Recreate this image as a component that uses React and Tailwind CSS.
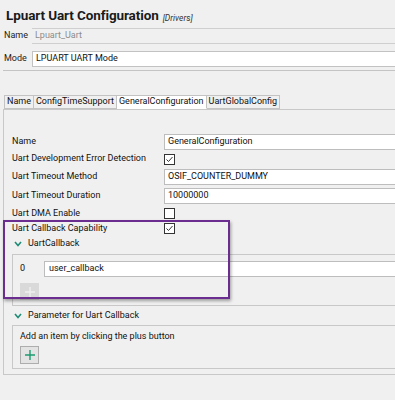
import React from 'react';

const font = { fontFamily: 'Roboto, "Liberation Sans", Arial, sans-serif' };

const Chevron = () => (
  <svg width="8" height="6" viewBox="0 0 8 6" className="shrink-0">
    <polyline points="1,1 4,4.5 7,1" fill="none" stroke="#1f8c78" strokeWidth="1.6" />
  </svg>
);

const Check = () => (
  <div className="w-[11px] h-[11px] border border-[#333] bg-white flex items-center justify-center">
    <svg width="9" height="9" viewBox="0 0 9 9">
      <polyline points="1.5,4.5 3.5,6.5 7.5,2" fill="none" stroke="#333" strokeWidth="1" />
    </svg>
  </div>
);

const Box = () => <div className="w-[11px] h-[11px] border border-[#333] bg-white" />;

const Field = ({ children, pad = 'pl-[3px]' }) => (
  <div className={`flex-1 h-[16px] bg-white border border-[#bdbdbd] flex items-center ${pad} text-[9px] text-[#111]`}>
    {children}
  </div>
);

const Row = ({ label, h, children }) => (
  <div className="flex items-center" style={{ height: h }}>
    <div className="w-[160px] pl-[8px] text-[9px] text-[#111]">{label}</div>
    <div className="flex-1 flex items-center">{children}</div>
  </div>
);

const PlusIcon = ({ color, size = 12 }) => (
  <svg width={size} height={size} viewBox="0 0 12 12">
    <path d="M6 1v10M1 6h10" stroke={color} strokeWidth="1.4" />
  </svg>
);

export default function App() {
  return (
    <div className="w-[395px] h-[400px] bg-[#f0f0f0] overflow-hidden relative" style={font}>
      <div className="w-[430px]">
        {/* header */}
        <div className="h-[26px] flex items-end pl-[6px] pb-[4px]">
          <span className="text-[13.5px] font-bold text-[#1b1b1b] leading-none tracking-[-0.1px]">Lpuart Uart Configuration</span>
          <span className="text-[8.5px] italic text-[#333] ml-[4px] leading-none">[Drivers]</span>
        </div>
        <div className="flex items-center h-[17px] mt-[1px]">
          <div className="w-[32px] pl-[4px] text-[9px] text-[#222]">Name</div>
          <div className="flex-1 h-[16px] border-y border-[#cfcfcf] flex items-center pl-[3px] text-[9px] text-[#8c8c8c]">Lpuart_Uart</div>
        </div>
        <div className="flex items-center h-[17px] mt-[6px]">
          <div className="w-[32px] pl-[4px] text-[9px] text-[#222]">Mode</div>
          <div className="flex-1 h-[16px] bg-white border border-[#c2c2c2] flex items-center pl-[3px] text-[9px] text-[#111]">LPUART UART Mode</div>
        </div>
        <div className="h-px bg-[#c4c4c4] ml-[3px] mt-[3px]" />

        {/* tabs */}
        <div className="flex ml-[4px] mt-[24px] h-[14px] text-[9px] text-[#111]">
          <div className="px-[2px] border border-[#c3c3c3] bg-[#f0f0f0] flex items-center">Name</div>
          <div className="px-[2px] border-y border-r border-[#c3c3c3] bg-[#f0f0f0] flex items-center">ConfigTimeSupport</div>
          <div className="px-[2px] border-y border-r border-[#c3c3c3] border-b-white bg-white flex items-center">GeneralConfiguration</div>
          <div className="px-[2px] border-y border-r border-[#c3c3c3] bg-[#f0f0f0] flex items-center">UartGlobalConfig</div>
        </div>

        {/* panel */}
        <div className="ml-[3px] border border-[#c8c8c8] pt-[23px] pb-[5px]">
          <Row label="Name" h={17}><Field>GeneralConfiguration</Field></Row>
          <Row label="Uart Development Error Detection" h={18}><Check /></Row>
          <Row label="Uart Timeout Method" h={18}><Field>OSIF_COUNTER_DUMMY</Field></Row>
          <Row label="Uart Timeout Duration" h={20}><Field>10000000</Field></Row>
          <Row label="Uart DMA Enable" h={15}><Box /></Row>
          <Row label="Uart Callback Capability" h={15}><Check /></Row>

          <div className="flex items-center gap-[6px] h-[14px] pl-[10px] mt-[1px] text-[9px] text-[#111]">
            <Chevron />
            <span>UartCallback</span>
          </div>
          <div className="ml-[8px] mt-[3px] border border-[#c8c8c8] pt-[6px] pb-[5px]">
            <div className="flex items-center h-[16px]">
              <div className="w-[31px] pl-[7px] text-[9px] text-[#111]">0</div>
              <Field pad="pl-[4px]">user_callback</Field>
            </div>
            <div className="ml-[7px] mt-[6px] w-[19px] h-[17px] bg-[#d9d9d9] flex items-center justify-center">
              <PlusIcon color="#efefef" />
            </div>
          </div>

          <div className="flex items-center gap-[6px] h-[14px] pl-[10px] mt-[3px] text-[9px] text-[#111]">
            <Chevron />
            <span>Parameter for Uart Callback</span>
          </div>
          <div className="ml-[8px] mt-[2px] border border-[#c8c8c8] pt-[5px] pb-[4px] pl-[7px]">
            <div className="h-[12px] flex items-center text-[9px] text-[#111]">Add an item by clicking the plus button</div>
            <div className="mt-[3px] w-[19px] h-[18px] bg-[#e3e3e3] border border-[#adadad] flex items-center justify-center">
              <PlusIcon color="#1d9a70" />
            </div>
          </div>
        </div>
      </div>

      {/* annotation box */}
      <div className="absolute left-[3px] top-[220px] w-[227px] h-[79px] border-2 border-[#6c2d91] shadow-[1px_2px_3px_rgba(0,0,0,0.35)]" />
    </div>
  );
}
